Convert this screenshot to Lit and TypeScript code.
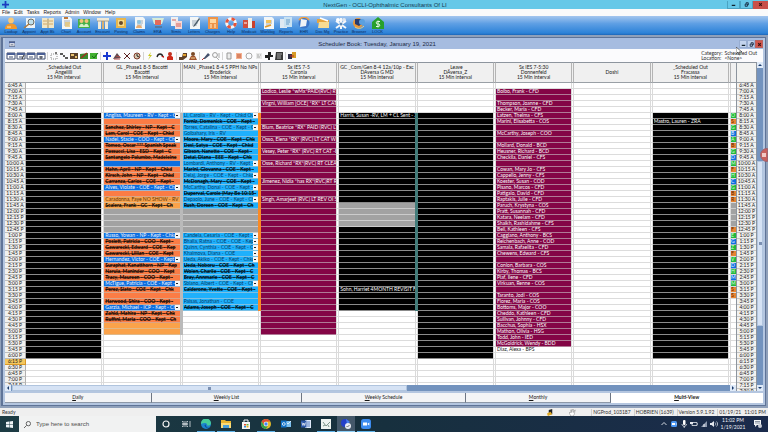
import { LitElement, html, css, svg, nothing } from "lit";
import type { SVGTemplateResult, TemplateResult } from "lit";
import { customElement } from "lit/decorators.js";
import { classMap } from "lit/directives/class-map.js";

interface Slot {
  tone: string;
  text?: string;
  strong?: boolean;
  menu?: boolean;
}
interface Column {
  title: string[];
  slots: Map<number, Slot>;
  edge?: { tone: string; from: number; to: number };
}

/* Slot numbers count quarter hours; 0 is 8:00 A. */
const FIRST = -5;
const LAST = 46;

const timeLabel = (slot: number): string => {
  const minutes = 8 * 60 + slot * 15;
  const hour = Math.floor(minutes / 60);
  const shown = hour > 12 ? hour - 12 : hour;
  return `${shown}:${String(minutes % 60).padStart(2, "0")} ${hour < 12 ? "A" : "P"}`;
};

const fill = (tone: string, from: number, to: number, slots = new Map<number, Slot>()) => {
  for (let i = from; i <= to; i++) slots.set(i, { tone });
  return slots;
};
const put = (slots: Map<number, Slot>, entries: [number, string][]) => {
  for (const [i, text] of entries) slots.set(i, { tone: slots.get(i)?.tone ?? "free", text });
  return slots;
};
/* Prefix "*" marks a kept visit, "v" one with a drop-down. */
const visits = (slots: Map<number, Slot>, entries: [number, string, string?][]) => {
  for (const [i, raw, tone] of entries) {
    const strong = raw.startsWith("*");
    const menu = raw.startsWith("v");
    slots.set(i, {
      tone: tone ?? slots.get(i)?.tone ?? "free",
      text: strong || menu ? raw.slice(1) : raw,
      strong,
      menu,
    });
  }
  return slots;
};

const bacotti = fill("orange", 0, 34);
fill("amber", 14, 15, bacotti);
fill("lunch", 16, 19, bacotti);
fill("blue", 8, 8, bacotti);
fill("amber", 35, 36, bacotti);
visits(bacotti, [
  [0, "vAngliss, Maureen - RV - Kept - Chk", "blue"],
  [2, "*Sanchez, Shirley - NP - Kept - C"],
  [3, "*Lam, Carol - COE - Kept - Chkd"],
  [4, "vNadel, Stacie - COO - Kept - Chkd", "blue"],
  [5, "*Tomeo, Oscar *** Spanish Speak"],
  [6, "*Passucci, Lisa - ESD - Kept - C"],
  [7, "*Santangelo Palumbo, Madeleine"],
  [9, "*Hahn, April - NP - Kept - Chkd"],
  [10, "*Kirsch, John - NP - Kept - Chkd"],
  [11, "*Carranza, Carlos - COE - Kept -"],
  [12, "vAlves, Violate - COE - Kept - Chkd", "blue"],
  [14, "Caradonna, Faye NO SHOW - RV"],
  [15, "*Scalera, Frank - GC - Kept - Ch"],
  [20, "vRusso, Yowan - NP - Kept - Chkd", "blue"],
  [21, "*Poslett, Patricia - COO - Kept -"],
  [22, "*Gawarecki, Edward - COE - Kep"],
  [23, "*Gawarecki, Lillian - COE - Kept"],
  [24, "vHernandez, Victor - COE - Kept -", "blue"],
  [25, "*Suraphat, Kanatthorn - NP - Kep"],
  [26, "*Narula, Maninder - COO - Kept"],
  [27, "*Tracy, Maureen - COO - Kept -"],
  [28, "vMcTigue, Patricia - COE - Kept - C", "blue"],
  [29, "*Perez, Siato - COE - Kept - Chk"],
  [31, "*Harwood, Shira - COO - Kept -"],
  [32, "vGarzia, Michael - ICP - Kept - Chk", "blue"],
  [33, "*Zahid, Mahira - NP - Kept - Chk"],
  [34, "*Ruffini, Maria - COO - Kept - Ch"],
]);

const broderick = fill("sky", 0, 32);
fill("lunch", 16, 19, broderick);
visits(broderick, [
  [0, "vLi, Carolla - RV - Kept - Chkd Out"],
  [1, "*Forniz, Domenick - COE - Kept -"],
  [2, "vTorres, Catalina - COE - Kept - Chk"],
  [3, "Golbahary, Iris - RV"],
  [4, "*Moore, Mary - COE - Kept - Chk"],
  [5, "*Desi, Satya - COE - Kept - Chkd"],
  [6, "*Gibson, Nanette - COE - Kept -"],
  [7, "*Detal, Diana - EEE - Kept - Chk"],
  [8, "vLombardi, Anthony - RV - Kept - C"],
  [9, "*Marini, Giovanna - COE - Kept -"],
  [10, "vDelaj, Jorge - COE - Kept - Chkd O"],
  [11, "*McDonagh, Mary - COE - Kept -"],
  [12, "vMcCarthy, Donal - COE - Kept - C"],
  [13, "*Duperval, Carole (May Be 10:15-"],
  [14, "vDepaolo, June - COE - Kept - Chk"],
  [15, "*Rush, Doreen - COE - Kept - Ch"],
  [20, "vCandela, Cesaria - COE - Kept - Ch"],
  [21, "vBhalla, Ratna - COE - COE - Kept -"],
  [22, "vQuinn, Cynthia - COE - Kept - Chk"],
  [23, "vKhaimova, Diana - COE"],
  [24, "vUeda, Akiko - COE - Kept - Chkd O"],
  [25, "*Ueda, Noboru - COE - Kept - Ch"],
  [26, "*Wolen, Charlie - COE - Kept - C"],
  [27, "*Bray, Annmarie - COE - Kept - C"],
  [28, "vSblano, Albert - COE - Kept - Chkd"],
  [29, "*Calderone, Yvette - COE - Kept -"],
  [31, "Paisas, Jonathan - COE"],
  [32, "*Adams, Joseph - COE - Kept - C"],
]);

const caronia = put(fill("wine", -4, 36), [
  [-4, "Lodico, Leslie *wMx*PAID(RVC) RT CA"],
  [-2, "Virgni, William [OCE] *RX* LT CAT FEM"],
  [2, "Blum, Beatrice *RX* PAID (RVC) LT CA"],
  [4, "Osso, Elena *RX* (RVC) LT CAT W/IO"],
  [6, "Vesey, Peter *RX* (RVC) RT CAT -BLO"],
  [8, "Osse, Richard *RX*(RVC) RT CLEARP"],
  [11, "Jimenez, Nidia *has RX*(RVC)RT REV"],
  [14, "Singh, Amarjeet (RVC) LT REV OI SET"],
]);

const gmd = fill("black", 0, 32);
fill("lunch", 15, 18, gmd);
put(gmd, [
  [0, "Harris, Susan -RV, LM + CL Sent - ZRA"],
  [29, "Sohn, Harriet 4MONTH REVISIT FROM"],
]);

const donnenfeld = put(fill("wine", -4, 38), [
  [-4, "Bolbo, Frank - CFD"],
  [-2, "Thompson, Joanne - CFD"],
  [-1, "Becker, Maria - CFD"],
  [0, "Latzen, Thelma - CFS"],
  [1, "Marini, Elisabetta - COS"],
  [3, "McCarthy, Joseph - COO"],
  [5, "Mollard, Donald - BCD"],
  [6, "Heusner, Richard - BCD"],
  [7, "Checkila, Daniel - CFS"],
  [9, "Cowan, Mary Jo - CFS"],
  [10, "Cappello, Jenny - CFS"],
  [11, "Koester, Susan - COD"],
  [12, "Pisano, Marcos - CFD"],
  [13, "Patigalo, David - CFD"],
  [14, "Raptakis, Julie - CFD"],
  [15, "Paruch, Krystyna - COS"],
  [16, "Pratt, Susannah - CFD"],
  [17, "Katara, Neelam - CFD"],
  [18, "Shaikh, Rashidahme - CFS"],
  [19, "Bell, Kathleen - CFS"],
  [20, "Caggiano, Anthony - BCS"],
  [21, "Reichenbach, Anne - COD"],
  [22, "Samala, Rafaelita - CFD"],
  [23, "Chewens, Edward - CFS"],
  [25, "Conlon, Barbara - COS"],
  [26, "Kirby, Thomas - BCS"],
  [27, "Piaf, Ilene - CFD"],
  [28, "Virkuan, Renne - COS"],
  [30, "Taranto, Jodi - COS"],
  [31, "Florez, Maria - COS"],
  [32, "Bottoms, Major - COO"],
  [33, "Cheddo, Kathleen - CFD"],
  [34, "Sullivan, Johnny - CFD"],
  [35, "Bacchus, Sophia - HSX"],
  [36, "Mathon, Olivia - HSG"],
  [37, "Todd, John - IED"],
  [38, "McGoldrick, Wendy - BDD"],
  [39, "Diaz, Alexa - BPS"],
]);

const COLUMNS: Column[] = [
  { title: ["_Scheduled Out", "Angelilli", "15 Min interval"], slots: fill("black", 0, 40) },
  {
    title: ["GL _Phase1 8-5 Bacotti", "Bacotti", "15 Min interval"],
    slots: bacotti,
    edge: { tone: "edge-grey", from: 0, to: 36 },
  },
  {
    title: ["MAN _Phase1 8-4 S PPH No NPs", "Broderick", "15 Min interval"],
    slots: broderick,
    edge: { tone: "edge-orange", from: 0, to: 32 },
  },
  { title: ["Sx IES 7-5", "Caronia", "15 Min interval"], slots: caronia },
  {
    title: ["GC _Com/Gen 8-4 12a/10p - Exc", "DAversa G MD", "15 Min interval"],
    slots: gmd,
    edge: { tone: "edge-teal", from: 0, to: 32 },
  },
  { title: ["_Leave", "DAversa_Z", "15 Min interval"], slots: fill("black", 0, 40) },
  { title: ["Sx IES 7-5:30", "Donnenfeld", "15 Min interval"], slots: donnenfeld },
  { title: ["Doshi"], slots: new Map() },
  {
    title: ["_Scheduled Out", "Fracassa", "15 Min interval"],
    slots: put(fill("black", 0, 40), [[1, "Mastro, Lauren - ZRA"]]),
  },
];

/* One letter per slot of the column that is cut off on the right. */
const SLIVER: [string, string][] = [
  ["green", "O"], ["rust", "S"], ["green", "G"], ["blue", "B"], ["green", "A"],
  ["rust", "B"], ["green", "G"], ["blue", "D"], ["green", "M"], ["rust", "F"],
  ["green", "H"], ["blue", "C"], ["green", "G"], ["rust", "B"], ["rust", "R"],
  ["lunch", ""], ["lunch", ""], ["lunch", ""], ["lunch", ""], ["rust", "F"],
  ["green", "E"], ["blue", "G"], ["green", "Z"], ["rust", "F"], ["green", "V"],
  ["blue", "D"], ["green", "H"], ["blue", "M"], ["green", "M"], ["rust", "S"],
  ["rust", "S"],
];

const MENUS = ["File", "Edit", "Tasks", "Reports", "Admin", "Window", "Help"];

const page = (extra: SVGTemplateResult | typeof nothing = nothing) => svg`
  <path d="M2 0h8l2 2v10H2z" fill="#f3f6f6"/><path d="M4 4h6M4 6h6M4 8h5" stroke="#8aa0b0" stroke-width=".8"/>${extra}`;

const TOOLS: [string, SVGTemplateResult][] = [
  ["Lookup", svg`<circle cx="6" cy="3.400" r="2.800" fill="#f8c878"/><path d="M0 12c0-4 3-5.500 6-5.500s6 1.500 6 5.500z" fill="#f0982c"/><path d="M2 10h4" stroke="#ffe2a8"/>`],
  ["Appoint", svg`<path d="M3 1h9v10H3z" fill="#eef4f6"/><circle cx="8" cy="5" r="3" fill="#bfe0ec" stroke="#6d6a60"/><path d="M6 7l-5 4" stroke="#b07a3c" stroke-width="1.600"/>`],
  ["Appt Bk", svg`<path d="M0 1h5l1 1 1-1h5v10H0z" fill="#f2e6c4"/><path d="M6 2v9" stroke="#a88d55"/><path d="M1 4h4M7 4h4M1 7h4M7 7h4" stroke="#c99b50" stroke-width=".8"/>`],
  ["Chart", svg`${page(svg`<path d="M4 0h4v2H4z" fill="#c0793a"/><path d="M5 5h5v5H5z" fill="#e9c46a" opacity=".7"/>`)}`],
  ["Account", svg`<path d="M0 2h12v9H0z" fill="#46b048"/><circle cx="3.500" cy="4" r="2" fill="#f4c27a"/><circle cx="8.500" cy="4" r="2" fill="#f4c27a"/><path d="M1 10c1-4 4-4 5-1 1-3 4-3 5 1z" fill="#d6f0c8"/>`],
  ["Encount", svg`<path d="M0 1h12v3H0zM1 4h3v8H1zM8 4h3v8H8z" fill="#f0ead8"/><path d="M5 4h2v8H5z" fill="#d9b070"/><path d="M0 4h12" stroke="#9a8a6a" stroke-width=".7"/>`],
  ["Posting", svg`<path d="M1 1h10v10H1z" fill="#e8b64c"/><path d="M3 3h6v6H3z" fill="#f6dc8a"/><circle cx="6" cy="6" r="2" fill="#694a2a"/>`],
  ["Claims", svg`${page(svg`<circle cx="6" cy="5" r="2" fill="#8cc4e0"/><path d="M3 11c0-4 6-4 6 0z" fill="#e7ad72"/>`)}`],
  ["ERA", svg`<path d="M0 1h12l-2 6H2z" fill="#d8ecd8"/><path d="M3 3h6v5H3z" fill="#e46a5a"/><path d="M3 10h7" stroke="#58708a" stroke-width="1.500"/>`],
  ["Stmts", svg`<path d="M1 0h7v9H1z" fill="#f0f0f0"/><path d="M5 4h7v8H5z" fill="#f7d8d4"/><path d="M2 3h4M6 7h5M6 9h5" stroke="#d0625c"/>`],
  ["Letters", svg`${page(svg`<path d="M11 1L6 8l-1 2 2-1 5-7z" fill="#4a5c68"/>`)}`],
  ["Charges", svg`<path d="M1 0h10v12H1z" fill="#ee9448"/><path d="M3 2h6v4H3z" fill="#ffd8a0"/><path d="M3 8h2M7 8h2M3 10h2M7 10h2" stroke="#fff1d0" stroke-width="1.200"/>`],
  ["Help", svg`<circle cx="6" cy="6" r="4.300" fill="none" stroke="#f6f6f6" stroke-width="3"/><circle cx="6" cy="6" r="4.300" fill="none" stroke="#e4543a" stroke-width="3" stroke-dasharray="3.380 3.380"/>`],
  ["Medicati", svg`<path d="M0 3h5v8H0z" fill="#d24e3c"/><path d="M5 1h4v10H5z" fill="#f2efe6"/><path d="M9 4h3v7H9z" fill="#c8402e"/><path d="M1 6h3" stroke="#fff"/>`],
  ["Worklog", svg`${page(svg`<path d="M4 3h5v3H4z" fill="#f2c25a"/><path d="M3 10l6-2" stroke="#e39a28" stroke-width="1.500"/>`)}`],
  ["Reports", svg`<path d="M0 2h7v9H0z" fill="#dfe9f2"/><path d="M4 0h8v10H4z" fill="#c9e2f2"/><path d="M6 3h4M6 5h4M6 7h3" stroke="#5c94c4" stroke-width=".9"/>`],
  ["EHR", svg`<circle cx="6" cy="6" r="5.500" fill="#3b75c8"/><path d="M3 2l6 1-1 6-6 1z" fill="#f0f2f6"/><path d="M1 3c2-3 7-4 10 0" stroke="#f3a040" stroke-width="1.500" fill="none"/>`],
  ["Doc Mg", svg`<path d="M0 2h5l1 1h6v3H0z" fill="#e5a540"/><path d="M2 5h10v6H1z" fill="#f8dc92"/><path d="M3 1l8 3" stroke="#fff" stroke-width="1.500"/>`],
  ["Practice", svg`<circle cx="3" cy="3" r="2" fill="#fff"/><circle cx="9" cy="3" r="2" fill="#dfe6ee"/><path d="M1 11l10-7M1 4l10 7M6 1v11" stroke="#f6f8fa" stroke-width="2"/><circle cx="6" cy="7" r="1.500" fill="#5b87b5"/>`],
  ["Browser", svg`<circle cx="5" cy="6" r="5" fill="#e8973a"/><path d="M2 2h6l2 4-4 3-4-2z" fill="#283c70"/><circle cx="9" cy="5" r="3" fill="#5aa0e0"/><path d="M2 10c3 2 6 2 9-1" stroke="#fbd070" fill="none"/>`],
  ["LOCK", svg`<path d="M6 0l6 5v7H0V5z" fill="#27a02c"/><path d="M8 4.500H5.500a1.200 1.200 0 000 2.500h1a1.200 1.200 0 010 2.500H4M6 3.500v7" stroke="#eafbe6" fill="none"/>`],
];

const form = svg`<path d="M0 1h8v6H0z" fill="#fff" stroke="#3c4a6c"/><path d="M0 1h8v2H0z" fill="#4a5f95"/><path d="M2 5h4" stroke="#3c4a6c"/>`;
const BOOK_TOOLS: (SVGTemplateResult | null)[] = [
  form,
  svg`${form}<path d="M5 7l2-4" stroke="#333"/>`,
  form,
  svg`${form}<path d="M4 4v3" stroke="#333"/>`,
  null,
  svg`<path d="M1 2h6v5H1z" fill="none" stroke="#8a8a8a" stroke-dasharray="1 1"/><path d="M5 0h2v2H5z" fill="#777"/>`,
  svg`<path d="M0 1h3v2H0zM3 3h2v2H3zM5 5h3v2H5z" fill="#5a5a5a"/>`,
  svg`<path d="M0 1h8v6H0z" fill="#5a4028"/><path d="M1 2h3v2H1zM5 4h2v2H5z" fill="#e7c070"/>`,
  svg`<path d="M0 2l8-1v6H0z" fill="#3a8a2e"/><path d="M1 6l6-5" stroke="#a03020" stroke-width="1.500"/>`,
  svg`<path d="M0 1h7v6H0z" fill="#42b030"/><path d="M2 4l2 2 4-5" stroke="#156a14" fill="none"/>`,
  null,
  svg`<path d="M3 0h2v3h3v2H5v3H3V5H0V3h3z" fill="#1838d0"/>`,
  svg`<path d="M0 7l4-6 4 5z" fill="#5c4a50"/><path d="M1 7h6M3 4l4 1" stroke="#b04848"/>`,
  svg`<path d="M1 1l6 6M7 1L1 7" stroke="#5a2020"/>`,
  svg`<circle cx="4" cy="4" r="3" fill="#d8c8b0" stroke="#803c2c"/><path d="M4 2v2l2 1" stroke="#222" fill="none"/>`,
  null,
  svg`<path d="M5 0L2 4h2L2 8l4-5H4z" fill="#c8c820"/>`,
  svg`<path d="M1 5c1-4 5-4 6 0" stroke="#222" stroke-width="1.300" fill="none"/><path d="M5 4h3v2z" fill="#c02020"/>`,
  svg`<circle cx="4" cy="2" r="2" fill="#c03020"/><path d="M1 8V5l3-2 3 2v3z" fill="#d02818"/>`,
  null,
  svg`<path d="M0 5h3l1-4h4v4L4 8H0z" fill="#604028"/><path d="M4 2h3v2H4z" fill="#e0a030"/>`,
  svg`<circle cx="4" cy="2" r="2" fill="#7a4a28"/><path d="M0 8l2-4h4l2 4z" fill="#a0522d"/><path d="M2 6h4" stroke="#f0d090"/>`,
  null,
  svg`<path d="M1 7l5-6 2 2-5 4z" fill="#44506c"/><path d="M0 8l2-2" stroke="#b03030"/>`,
  svg`<circle cx="3" cy="3" r="2.400" fill="none" stroke="#9a9a9a"/><path d="M4 5l3 3M7 1v5" stroke="#aaa"/>`,
  null,
  svg`<path d="M2 1h4v6H2z" fill="#ececec" stroke="#999"/>`,
  svg`<path d="M1 1h6v6H1z" fill="#f4b090"/><path d="M2 3h4M2 5h4" stroke="#c05838"/>`,
  svg`<circle cx="4" cy="4" r="3" fill="none" stroke="#aaa"/>`,
  svg`<path d="M1 1h6v6H1z" fill="#e8e8e8"/><path d="M2 3h2M5 3h1M2 5h3" stroke="#aaa"/>`,
  svg`<path d="M3 0h3v3h2v2H5v3H3V6H0V3h3z" fill="#222"/>`,
  svg`<path d="M1 0h7v8H0z" fill="#383838"/><path d="M2 2h5M2 4h4M2 6h4" stroke="#ddd" stroke-width=".7"/>`,
  null,
  svg`<path d="M0 2h4v5H0z" fill="#303048"/><path d="M4 0h4v6H4z" fill="#d89c28"/><path d="M2 4h4" stroke="#c02828"/>`,
];

const APPS: { name: string; art: SVGTemplateResult; state?: string }[] = [
  { name: "Cortana", art: svg`<circle cx="5" cy="5" r="3" fill="none" stroke="#f2f2f2" stroke-width="1.200"/>` },
  { name: "Task view", art: svg`<path d="M1.500 2v1h5V2M1.500 8V7h5v1M1.500 4.500h5v1h-5zM9 2v6" fill="none" stroke="#c6ced2" stroke-width=".9"/>` },
  { name: "Edge", state: "open", art: svg`<circle cx="5" cy="5" r="5" fill="#1c84cc"/><path d="M0 5a5 5 0 0110-1c0 3-4 3-4 2 1-2-3-3-6-1z" fill="#46cc9a"/><path d="M3.500 6c0 2 2 4 5 2.500C6 9 5 8 4.800 5.500z" fill="#0e4f9c"/>` },
  { name: "File Explorer", state: "open", art: svg`<path d="M0 1h4l1 1h5v7H0z" fill="#e8b430"/><path d="M0 4h10v5H0z" fill="#f9da78"/><path d="M2 6h6v3H2z" fill="#4a9fd8"/>` },
  { name: "Store", art: svg`<path d="M1 3h8v7H1z" fill="#f5f5f5"/><path d="M3 3V1h4v2" stroke="#f5f5f5" fill="none"/><path d="M3 5h2v1.500H3z" fill="#e05030"/><path d="M5.500 5h2v1.500h-2z" fill="#6cb030"/><path d="M3 7h2v1.500H3z" fill="#3090d8"/><path d="M5.500 7h2v1.500h-2z" fill="#f0b020"/>` },
  { name: "Chrome", state: "open", art: svg`<circle cx="5" cy="5" r="5" fill="#e2b92a"/><path d="M.7 2.500A5 5 0 019.300 2.500H5a2.500 2.500 0 00-2.200 3.700z" fill="#de4a38"/><path d="M.7 2.500A5 5 0 005 10l2.200-3.700a2.500 2.500 0 01-4.400 0z" fill="#2f9e4e"/><circle cx="5" cy="5" r="2.200" fill="#fff"/><circle cx="5" cy="5" r="1.700" fill="#4285f4"/>` },
  { name: "Outlook", art: svg`<path d="M4 2h6v6H4z" fill="#7cc0f0"/><path d="M4 2l3 3 3-3" stroke="#fff" fill="none" stroke-width=".7"/><path d="M0 1.500h5.500v7H0z" fill="#1172c8"/><circle cx="2.800" cy="5" r="1.400" fill="none" stroke="#fff" stroke-width=".8"/>` },
  { name: "Word", art: svg`<path d="M4 1h6v8H4z" fill="#dde8f8"/><path d="M6 3h3M6 5h3M6 7h3" stroke="#3b68b8" stroke-width=".8"/><path d="M0 1.500h5.500v7H0z" fill="#2a56a8"/><path d="M1 3.500l.9 3 .9-2.500.9 2.500.8-3" stroke="#fff" fill="none" stroke-width=".7"/>` },
  { name: "NextGen", state: "open", art: svg`<path d="M0 0h10v10H0z" fill="#eef3f0"/><path d="M2 3l3 4 4-4M2 7l2-1M7 6l1 2" stroke="#7d968c" fill="none"/>` },
  { name: "Remote desktop", state: "active", art: svg`<circle cx="4" cy="4" r="4" fill="#2440c8"/><path d="M5 0l4 3-3 2z" fill="#4a80f0"/><circle cx="7" cy="7" r="3" fill="#e8ecf4"/><path d="M5.500 7l1 1 2-2" stroke="#555" fill="none" stroke-width=".8"/>` },
  { name: "Zoom", state: "open", art: svg`<rect width="10" height="10" rx="2.500" fill="#3c8cf0"/><path d="M2 3.500h4v3H2zM6.500 4.800L8.300 3.600v2.800L6.500 5.300z" fill="#fff"/>` },
];

const TRAY: [string, SVGTemplateResult][] = [
  ["Show hidden icons", svg`<path d="M1.500 5L4 2.500 6.500 5" fill="none" stroke="#e4e8ee" stroke-width=".9"/>`],
  ["Zoom", svg`<rect x="1" y="1" width="6" height="6" rx="1.500" fill="#4a96f4"/><path d="M2 3h3v2H2zM5.500 4l1-1v2z" fill="#fff"/>`],
  ["Microphone", svg`<rect x="3" y="0" width="2.500" height="5" rx="1" fill="#fff"/><path d="M2 4c0 3 4.500 3 4.500 0M4.200 6v2" stroke="#fff" fill="none" stroke-width=".7"/>`],
  ["Battery", svg`<path d="M2 2.500h5v3H2zM7.500 3.500v1" fill="none" stroke="#e4e8ee" stroke-width=".8"/><path d="M0 2h3v2H0z" fill="#e4e8ee"/>`],
  ["Network", svg`<path d="M1 7l6-6v6z" fill="#8f9bb0"/><path d="M4 7V4" stroke="#fff" stroke-width=".8"/>`],
  ["Volume", svg`<path d="M0 3h1.500L4 1v6L1.500 5H0z" fill="#e4e8ee"/><path d="M5 2.500c1 1 1 2 0 3M6.500 1.500c1.500 1.500 1.500 3.500 0 5" fill="none" stroke="#e4e8ee" stroke-width=".7"/>`],
];

const WINDOW_MARKS: [string, SVGTemplateResult][] = [
  ["Minimize", svg`<path d="M2 5h4" stroke="#12232e" stroke-width="1.400"/>`],
  ["Restore", svg`<path d="M2.500 3.500h2.500V6H2.500zM3.500 3V2H6v2.500h-.6" fill="none" stroke="#12233c" stroke-width="1"/>`],
  ["Close", svg`<path d="M2.500 2.500l3 3M5.500 2.500l-3 3" stroke="#3a1010" stroke-width="1.200"/>`],
];

const glyph = (art: SVGTemplateResult, box: number, cls: string) =>
  html`<svg class=${cls} viewBox="0 0 ${box} ${box}" aria-hidden="true">${art}</svg>`;

const chrome = css`
  * { box-sizing: border-box; }
  button {
    margin: 0; padding: 0; border: 0; background: none;
    font: inherit; color: inherit; cursor: default;
  }
  svg { display: block; }
`;

@customElement("window-buttons")
class WindowButtons extends LitElement {
  static styles = [chrome, css`
    :host { display: flex; height: 8px; }
    button { width: 13px; height: 8px; display: grid; place-items: center; border: 1px solid #4ba3c2; border-top: 0; }
    svg { width: 7px; height: 7px; }
    .close { width: 15px; background: #c8504a; border-color: #c8504a; }
    :host([compact]) button { width: 8px; background: #c3d4ee; border: 1px solid #98aed2; }
    :host([compact]) .close { background: #d2564c; border-color: #b8625e; }
  `];
  render() {
    return WINDOW_MARKS.map(([name, art]) => html`
      <button class=${name.toLowerCase()} aria-label=${name}>${glyph(art, 8, "mark")}</button>`);
  }
}

@customElement("schedule-grid")
class ScheduleGrid extends LitElement {
  static styles = [chrome, css`
    :host { display: block; }
    table { width: 100%; border-collapse: separate; border-spacing: 0; table-layout: fixed; }
    .time { width: 21px; }
    .gap { width: 3px; }
    .sliver { width: 5px; }
    th { font-weight: normal; padding: 0; }
    thead th {
      height: 21px; background: #f0f0f0; border-top: 1px solid #8d959e; border-bottom: 1px solid #9aa0a6;
      line-height: 5px; white-space: nowrap; overflow: hidden;
    }
    thead .gap { border-left: 1px solid #b4b4b4; border-right: 1px solid #b4b4b4; }
    thead span { display: block; }
    td { padding: 0; height: 6px; border-bottom: 1px solid #dcdcdc; background: #fff; }
    tbody th {
      height: 6px; line-height: 5px; background: #f2f2f0; border-bottom: 1px solid #bdbdbd;
      border-right: 1px solid #b0b0b0; white-space: nowrap; overflow: hidden;
    }
    tbody .now { background: #f4c860; border-color: #d89828; }
    .line { display: flex; height: 5px; line-height: 5px; overflow: hidden; white-space: nowrap; padding-left: 1px; }
    .label { flex: 1; min-width: 0; overflow: hidden; }
    td.gap { background: #fff; border-left: 1px solid #dadada; border-right: 1px solid #dadada; }
    .black { background: #000; color: #fff; border-bottom-color: #8b8b8b; }
    .wine { background: #840546; color: #fff; border-bottom-color: #b07a96; }
    .orange { background: #fb7c45; color: #281006; border-bottom-color: #dba386; }
    .amber { background: #faa24a; color: #5c3408; border-bottom-color: #e0b888; }
    .blue { background: #0d6fe0; color: #f2f8ff; border-bottom-color: #9db4d0; }
    .sky { background: #1eb0fc; color: #063a66; border-bottom-color: #7cc0e4; }
    .lunch { background: #a2a2a2; border-bottom-color: #cccccc; }
    .green { background: #22b83c; color: #d8ffd8; }
    .rust { background: #e88430; color: #5c1c04; }
    .strong { font-weight: bold; text-decoration: line-through #0008; color: #000; }
    td.edge-grey { background: #bababa; border-color: #bababa; }
    td.edge-orange { background: #fa8a24; border-color: #fa8a24; }
    td.edge-teal { background: #437c7a; border-color: #437c7a; }
    td.sliver { line-height: 5px; overflow: hidden; }
    .drop { width: 5px; height: 5px; background: #f6f6f6; display: grid; place-items: center; }
    .drop::before { content: ""; width: 2px; height: 1px; background: #222; }
  `];

  private cell(slot?: Slot): TemplateResult {
    if (!slot) return html`<td></td>`;
    return html`<td class=${slot.tone}>${slot.text
      ? html`<div class="line">
          <span class=${classMap({ label: true, strong: !!slot.strong })}>${slot.text}</span>
          ${slot.menu ? html`<button class="drop" aria-label="Visit options"></button>` : nothing}
        </div>`
      : nothing}</td>`;
  }

  render() {
    const rows = Array.from({ length: LAST - FIRST }, (_, i) => i + FIRST);
    return html`<table>
      <colgroup>
        <col class="time">
        ${COLUMNS.map(() => html`<col><col class="gap">`)}
        <col class="sliver">
      </colgroup>
      <thead><tr>
        <th></th>
        ${COLUMNS.map((c) => html`<th scope="col">${c.title.map((t) => html`<span>${t}</span>`)}</th><th class="gap"></th>`)}
        <th></th>
      </tr></thead>
      <tbody>${rows.map((r) => html`<tr>
        <th scope="row" class=${r === 41 ? "now" : ""}>${timeLabel(r)}</th>
        ${COLUMNS.map((c) => html`${this.cell(c.slots.get(r))}<td class="gap ${
          c.edge && r >= c.edge.from && r <= c.edge.to ? c.edge.tone : ""}"></td>`)}
        <td class="sliver ${SLIVER[r]?.[0] ?? ""}">${SLIVER[r]?.[1] ?? ""}</td>
      </tr>`)}</tbody>
    </table>`;
  }
}

@customElement("time-rail")
class TimeRail extends LitElement {
  static styles = [chrome, css`
    :host { display: block; background: #f2f2f0; border: solid #8d959e; border-width: 1px 1px 0; overflow: hidden; }
    .head { height: 20px; border-bottom: 1px solid #9aa0a6; }
    ol { list-style: none; margin: 0; padding: 0; }
    li { height: 6px; line-height: 5px; text-align: center; border-bottom: 1px solid #c4c4c4; white-space: nowrap; }
  `];
  render() {
    return html`<div class="head"></div><ol>
      ${Array.from({ length: LAST - FIRST + 1 }, (_, i) => html`<li>${timeLabel(i + FIRST)}</li>`)}
    </ol>`;
  }
}

@customElement("app-root")
class AppRoot extends LitElement {
  static styles = [chrome, css`
    :host {
      display: flex; flex-direction: column; height: 100vh; overflow: hidden;
      font-family: Lato, "Liberation Sans", Arial, sans-serif; font-size: 5px; line-height: 5px; color: #161616;
      background: #8fa0ba; cursor: default;
    }
    .title {
      flex: none; height: 9px; display: grid; grid-template-columns: 1fr auto 1fr; align-items: center;
      background: #66c8e8; color: #143c52; font-family: "Liberation Sans", Arial, sans-serif; font-size: 6px; line-height: 8px; padding: 0 0 0 2px;
    }
    .plus { width: 7px; height: 7px; }
    .title window-buttons { justify-self: end; }
    .menus { flex: none; height: 7px; display: flex; align-items: center; gap: 4px; padding-left: 2px; background: #fafafa;
      font-family: "Liberation Sans", Arial, sans-serif; }
    .tools {
      flex: none; height: 19px; display: flex; padding: 1px 0 0 2px;
      background: linear-gradient(#a4c6ee, #5e9fe4 40%, #2c82d8 90%, #1c66b8);
    }
    .tool {
      width: 18px; display: flex; flex-direction: column; align-items: center; font-size: 4px;
      font-family: "Liberation Sans", Arial, sans-serif; color: #0c2c5c; white-space: nowrap;
    }
    .tools .tool:nth-child(3n) { width: 19px; }
    .art { width: 12px; height: 12px; }
    .book {
      flex: 1; min-height: 0; margin: 2px 2px 2px 1px; display: flex; flex-direction: column;
      background: #b4c6e0; border: 1px solid #5f7498; border-left-width: 2px; padding: 0 2px 2px;
    }
    .caption {
      flex: none; height: 11px; display: grid; grid-template-columns: auto 1fr auto; align-items: center; text-align: center;
      background: #a6bce0; color: #1c2a44; font-family: "Liberation Sans", Arial, sans-serif; font-size: 6px; line-height: 8px; padding: 0 0 0 4px;
    }
    .form { width: 6px; height: 6px; }
    .strip { flex: none; height: 13px; display: flex; align-items: center; justify-content: space-between; background: #fbfbfd; padding: 0 4px 0 2px; }
    .actions { display: flex; gap: 2px; }
    .action { width: 8px; height: 8px; overflow: visible; }
    .rule { width: 1px; height: 8px; background: #d4d4d4; }
    .filter { display: grid; grid-template-columns: auto auto; column-gap: 2px; margin: 0; color: #2c2c2c; padding-right: 2px; }
    .filter dd { margin: 0; }
    .panes { flex: 1; min-height: 0; display: flex; }
    .main { flex: 1; min-width: 0; display: flex; flex-direction: column; }
    schedule-grid { flex: 1; min-height: 0; overflow: hidden; background: #fff; }
    time-rail { width: 21px; }
    .across { flex: none; height: 6px; display: flex; background: #7393be; }
    .down { width: 6px; display: flex; flex-direction: column; background: #7393be; }
    .arrow { flex: none; width: 6px; height: 6px; background: #dfeaf8; color: #1c3c6c; }
    .thumb { display: grid; place-items: center; background: #d5e2f4; border: 1px solid #b0c4de; }
    .thumb::before { content: ""; width: 3px; height: 3px; background: #7b90b2; }
    .across .thumb { width: 54%; margin-left: 1px; }
    .across .arrow:last-child { margin-left: auto; }
    .down .thumb { height: 50%; margin-top: 93px; }
    .down .arrow:last-child { margin-top: auto; }
    .tabs {
      flex: none; height: 10px; margin-top: 2px; display: grid;
      grid-template-columns: 147fr 151fr 164fr 146fr 152fr; background: #f3f4f6;
    }
    .tab { border-right: 1px solid #6d7684; border-bottom: 1px solid #8d98a8; line-height: 7px; }
    .tab::first-letter { text-decoration: underline; }
    .tab.current { font-weight: bold; border-color: transparent; background: #fff; }
    .status { flex: none; height: 8px; display: flex; align-items: center; gap: 3px; padding: 0 2px; background: #efefef; color: #333; line-height: 7px; }
    .status .ready { flex: 1; }
    .field { border-left: 1px solid #cfcfcf; padding-left: 1px; white-space: nowrap; }
    .mini { width: 7px; height: 7px; margin-right: 12px; }
    .taskbar { flex: none; height: 16px; display: flex; background: linear-gradient(90deg, #1d3c44, #17303e 50%, #1b2b4c); }
    .start { width: 19px; display: grid; place-items: center; }
    .flag { width: 7px; height: 7px; }
    .search { width: 137px; display: flex; align-items: center; gap: 5px; padding-left: 5px; background: #f1f2f2; font-family: "Liberation Sans", Arial, sans-serif; }
    .lens { width: 7px; height: 7px; }
    .search input { flex: 1; min-width: 0; border: 0; padding: 0; outline: 0; background: none; font: inherit; font-size: 6px; line-height: 8px; color: #333; }
    .search input::placeholder { color: #4e4e4e; opacity: 1; }
    .apps { flex: 1; display: flex; gap: 2px; padding-left: 1px; }
    .app { width: 18px; display: grid; place-items: center; border-bottom: 1px solid transparent; }
    .app.open { border-color: #5fb4ea; }
    .app.active { border-color: #8cd0f8; background: #44586a; }
    .app svg { width: 10px; height: 10px; }
    .tray { display: flex; align-items: center; gap: 2px; color: #f4f6fa; }
    .tray svg { width: 8px; height: 8px; }
    .clock { width: 26px; text-align: center; line-height: 7px; }
    .notes { width: 20px; display: grid; place-items: center; }
    .pointer { position: absolute; left: 95.8%; top: 47px; width: 6px; height: 9px; }
    .bubble { position: absolute; right: 0; top: 148px; width: 8px; height: 14px; border-radius: 7px 0 0 7px; background: #c8605c; border: 1px solid #9c6470; display: grid; place-items: center; }
    .bubble::before { content: ""; width: 4px; height: 4px; background: #f0c8c4; }
  `];

  render() {
    return html`
      <header class="title">
        <svg class="plus" viewBox="0 0 8 8" aria-hidden="true"><path d="M3 0h2v3h3v2H5v3H3V5H0V3h3z" fill="#1c3cc0"/></svg>
        <span>NextGen - OCLI-Ophthalmic Consultants Of LI</span>
        <window-buttons></window-buttons>
      </header>
      <nav class="menus">${MENUS.map((m) => html`<button>${m}</button>`)}</nav>
      <div class="tools">${TOOLS.map(([name, art]) => html`<button class="tool">${glyph(art, 12, "art")}${name}</button>`)}</div>

      <main class="book">
        <div class="caption">
          <svg class="form" viewBox="0 0 8 8" aria-hidden="true">${form}</svg>
          <span>Scheduler Book: Tuesday, January 19, 2021</span>
          <window-buttons compact></window-buttons>
        </div>
        <div class="strip">
          <div class="actions">${BOOK_TOOLS.map((art) => art
            ? html`<button aria-label="Scheduler action">${glyph(art, 8, "action")}</button>`
            : html`<span class="rule"></span>`)}</div>
          <dl class="filter"><dt>Category:</dt><dd>Scheduled Out</dd><dt>Location:</dt><dd>&lt;None&gt;</dd></dl>
        </div>
        <div class="panes">
          <div class="main">
            <schedule-grid></schedule-grid>
            <div class="across">
              <button class="arrow" aria-label="Scroll left">${glyph(svg`<path d="M4 1L2 3l2 2z" fill="#1c3c6c"/>`, 6, "tip")}</button>
              <div class="thumb"></div>
              <button class="arrow" aria-label="Scroll right">${glyph(svg`<path d="M2 1l2 2-2 2z" fill="#1c3c6c"/>`, 6, "tip")}</button>
            </div>
          </div>
          <time-rail></time-rail>
          <div class="down">
            <button class="arrow" aria-label="Scroll up">${glyph(svg`<path d="M1 4l2-2 2 2z" fill="#1c3c6c"/>`, 6, "tip")}</button>
            <div class="thumb"></div>
            <button class="arrow" aria-label="Scroll down">${glyph(svg`<path d="M1 2l2 2 2-2z" fill="#1c3c6c"/>`, 6, "tip")}</button>
          </div>
        </div>
        <nav class="tabs">
          ${["Daily", "Weekly List", "Weekly Schedule", "Monthly", "Multi-View"].map((t) => html`
            <button class=${classMap({ tab: true, current: t === "Multi-View" })}>${t}</button>`)}
        </nav>
      </main>

      <footer class="status">
        <span class="ready">Ready</span>
        <svg class="mini" viewBox="0 0 8 8" aria-hidden="true"><path d="M2 1l4-1v6H2z" fill="#222"/><path d="M0 5l4-2 2 3-5 2z" fill="#e0a820"/></svg>
        <svg class="mini" viewBox="0 0 8 8" aria-hidden="true"><path d="M2 8L0 4h2V1h1v3l1-4h1v4l2-3-1 5-1 2z" fill="#fff" stroke="#888" stroke-width=".6"/></svg>
        <span class="field">NGProd_103187</span>
        <span class="field">HOBRIEN (1639)</span>
        <span class="field">Version 5.9.1.92</span>
        <span class="field">01/19/21</span>
        <span>11:01 PM</span>
      </footer>

      <div class="taskbar">
        <button class="start" aria-label="Start"><svg class="flag" viewBox="0 0 8 8"><path d="M0 1l3.500-.5v3H0zM4 .5L8 0v3.500H4zM0 4h3.500v3.500L0 7zM4 4h4v4l-4-.5z" fill="#eef4f6"/></svg></button>
        <label class="search">
          <svg class="lens" viewBox="0 0 8 8" aria-hidden="true"><circle cx="5" cy="3" r="2.500" fill="none" stroke="#444" stroke-width=".9"/><path d="M3 5L0 8" stroke="#444" stroke-width=".9"/></svg>
          <input type="text" placeholder="Type here to search" aria-label="Type here to search">
        </label>
        <div class="apps">${APPS.map((a) => html`
          <button class="app ${a.state ?? ""}" aria-label=${a.name}>${glyph(a.art, 10, "face")}</button>`)}</div>
        <div class="tray">
          ${TRAY.map(([name, art]) => html`<button aria-label=${name}>${glyph(art, 8, "sign")}</button>`)}
          <div class="clock">11:02 PM<br>1/19/2021</div>
          <button class="notes" aria-label="24 notifications">${glyph(svg`
            <path d="M0 0h7v5H3L1 7V5H0z" fill="#f2f4f6"/><path d="M1 1.500h5M1 3h5" stroke="#45546c" stroke-width=".6"/><circle cx="6" cy="6" r="2" fill="#c8ccd4"/>`, 8, "sign")}</button>
        </div>
      </div>

      <svg class="pointer" viewBox="0 0 6 9" aria-hidden="true"><path d="M0 0v7l2-2 1 3 1-.5-1-2.500h3z" fill="#fff" stroke="#222" stroke-width=".6"/></svg>
      <button class="bubble" aria-label="Recording control"></button>
    `;
  }
}
